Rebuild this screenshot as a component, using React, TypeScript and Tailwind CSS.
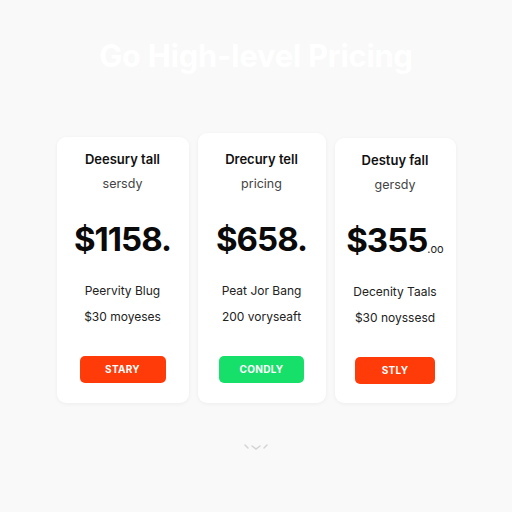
import React from "react";

type Plan = {
  title: string;
  sub: string;
  price: string;
  cents?: string;
  l1: string;
  l2: string;
  btn: string;
  color: string;
  w: string;
  h: string;
  btnW: string;
};

const plans: Plan[] = [
  { title: "Deesury tall", sub: "sersdy", price: "$1158.", l1: "Peervity Blug", l2: "$30 moyeses", btn: "STARY", color: "orange", w: "w-[132px]", h: "h-[266px]", btnW: "w-[86px]" },
  { title: "Drecury tell", sub: "pricing", price: "$658.", l1: "Peat Jor Bang", l2: "200 voryseaft", btn: "CONDLY", color: "green", w: "w-[128px]", h: "h-[270px]", btnW: "w-[85px]" },
  { title: "Destuy fall", sub: "gersdy", price: "$355", cents: ".oo", l1: "Decenity Taals", l2: "$30 noyssesd", btn: "STLY", color: "orange", w: "w-[121px]", h: "h-[265px]", btnW: "w-[80px]" },
];

function Card({ p, top }: { p: Plan; top: string }) {
  return (
    <div className={`${p.w} ${p.h} bg-white rounded-[9px] shadow-[0_1px_4px_rgba(0,0,0,0.05)] flex flex-col items-center ${top}`}>
      <div className="text-[13px] font-semibold text-[#111] leading-none">{p.title}</div>
      <div className="text-[12.5px] text-[#444] leading-none mt-[12px]">{p.sub}</div>
      <div className="mt-[32px] flex items-end leading-none">
        <span className="text-[33px] font-bold text-[#0a0a0a] tracking-[-1px]">{p.price}</span>
        {p.cents && <span className="text-[11px] text-[#222] mb-[2px]">{p.cents}</span>}
      </div>
      <div className="text-[12px] text-[#222] leading-none mt-[29px]">{p.l1}</div>
      <div className="text-[12px] text-[#222] leading-none mt-[14px]">{p.l2}</div>
      <div
        className={`${p.btnW} h-[27px] mt-[33px] rounded-[5px] flex items-center justify-center text-[10px] font-bold text-white tracking-[0.3px] ${
          p.color === "green" ? "bg-[#17e06a]" : "bg-[#ff3b0a]"
        }`}
      >
        {p.btn}
      </div>
    </div>
  );
}

export default function App() {
  return (
    <div
      className="w-[512px] h-[512px] bg-[#f9f9f9] flex flex-col items-center overflow-hidden"
      style={{ fontFamily: "Inter, 'Noto Sans', sans-serif" }}
    >
      <div className="mt-[40px] text-[31px] font-bold text-white leading-none tracking-[-0.3px]">
        Go High-level Pricing
      </div>
      <div className="mt-[62px] flex items-end gap-[9px] h-[270px]">
        <Card p={plans[0]} top="pt-[16px]" />
        <Card p={plans[1]} top="pt-[20px]" />
        <Card p={plans[2]} top="pt-[16px]" />
      </div>
      <div className="mt-[40px] flex gap-[4px]">
        <svg width="26" height="8" viewBox="0 0 26 8" fill="none" stroke="#d4d4d4" strokeWidth="1.5" strokeLinecap="round">
          <path d="M2 2 L5 5" />
          <path d="M9 3 L13 6 L17 3" />
          <path d="M21 5 L24 2" />
        </svg>
      </div>
    </div>
  );
}
